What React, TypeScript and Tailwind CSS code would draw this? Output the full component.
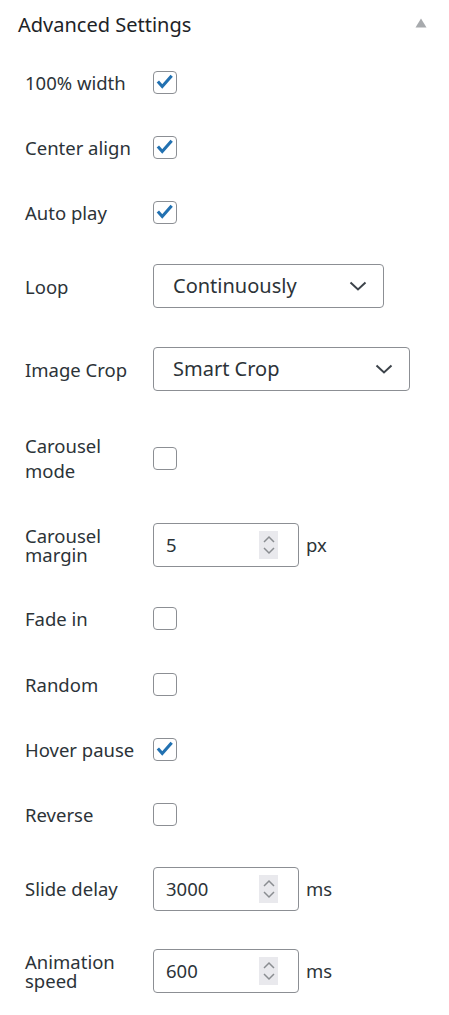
import React from "react";

const font = { fontFamily: '"Noto Sans", "Open Sans", sans-serif' };

function Check({ checked }: { checked: boolean }) {
  return (
    <div className="w-[24px] h-[23px] rounded-[4px] border border-[#8c8f94] bg-white flex items-center justify-center shrink-0">
      {checked && (
        <svg width="24" height="23" viewBox="0 0 24 23" className="block">
          <path d="M4.2 10.4 L9 15.8 L19.3 4.2" fill="none" stroke="#2271b1" strokeWidth="3.4" strokeLinejoin="miter" />
        </svg>
      )}
    </div>
  );
}

function Chevron() {
  return (
    <svg width="18" height="10" viewBox="0 0 18 10" className="block">
      <path d="M1.5 1.5 L9 8.5 L16.5 1.5" fill="none" stroke="#3c434a" strokeWidth="2" />
    </svg>
  );
}

function Select({ value, width }: { value: string; width: string }) {
  return (
    <div
      className={`${width} h-[44px] rounded-[4px] border border-[#8c8f94] bg-white flex items-center justify-between pl-[19px] pr-[16px] text-[20px] text-[#2c3338]`}
    >
      <span>{value}</span>
      <Chevron />
    </div>
  );
}

function NumberInput({ value, unit }: { value: string; unit: string }) {
  return (
    <div className="flex items-center">
      <div className="w-[146px] h-[44px] rounded-[4px] border border-[#8c8f94] bg-white flex items-center justify-between pl-[12px] pr-[20px] text-[18.5px] text-[#2c3338]">
        <span>{value}</span>
        <div className="w-[19px] h-[28px] bg-[#e9e9ed] flex flex-col items-center justify-center gap-[4px]">
          <svg width="12" height="8" viewBox="0 0 12 8" className="block">
            <path d="M1 7 L6 2 L11 7" fill="none" stroke="#8a8d91" strokeWidth="1.5" />
          </svg>
          <svg width="12" height="8" viewBox="0 0 12 8" className="block">
            <path d="M1 1 L6 6 L11 1" fill="none" stroke="#8a8d91" strokeWidth="1.5" />
          </svg>
        </div>
      </div>
      <span className="ml-[7px] text-[18.5px] text-[#2c3338]">{unit}</span>
    </div>
  );
}

function Row({
  h,
  label,
  leading = "leading-[25px]",
  children,
}: {
  h: string;
  label: string;
  leading?: string;
  children: React.ReactNode;
}) {
  return (
    <div className={`${h} flex items-center pl-[25px]`}>
      <div className={`w-[128px] shrink-0 pr-[6px] text-[18.5px] ${leading} text-[#2c3338]`}>{label}</div>
      {children}
    </div>
  );
}

export default function App() {
  return (
    <div className="w-[449px] min-h-[1015px] bg-white" style={font}>
      <div className="h-[50px] flex items-center justify-between pl-[18px] pr-[22px]">
        <span className="text-[20px] text-[#1d2327] leading-[26px]">Advanced Settings</span>
        <svg width="12" height="10" viewBox="0 0 12 10" className="block mb-[5px]">
          <path d="M6 0.5 L11.5 9.5 L0.5 9.5 Z" fill="#a7aaad" />
        </svg>
      </div>
      <Row h="h-[65px]" label="100% width">
        <Check checked />
      </Row>
      <Row h="h-[65px]" label="Center align">
        <Check checked />
      </Row>
      <Row h="h-[65px]" label="Auto play">
        <Check checked />
      </Row>
      <Row h="h-[82px]" label="Loop">
        <Select value="Continuously" width="w-[231px]" />
      </Row>
      <Row h="h-[84px]" label="Image Crop">
        <Select value="Smart Crop" width="w-[257px]" />
      </Row>
      <Row h="h-[94px]" label="Carousel mode">
        <Check checked={false} />
      </Row>
      <Row h="h-[80px]" label="Carousel margin" leading="leading-[19px]">
        <NumberInput value="5" unit="px" />
      </Row>
      <Row h="h-[67px]" label="Fade in">
        <Check checked={false} />
      </Row>
      <Row h="h-[65px]" label="Random">
        <Check checked={false} />
      </Row>
      <Row h="h-[65px]" label="Hover pause">
        <Check checked />
      </Row>
      <Row h="h-[65px]" label="Reverse">
        <Check checked={false} />
      </Row>
      <Row h="h-[83px]" label="Slide delay">
        <NumberInput value="3000" unit="ms" />
      </Row>
      <Row h="h-[82px]" label="Animation speed" leading="leading-[19px]">
        <NumberInput value="600" unit="ms" />
      </Row>
    </div>
  );
}
